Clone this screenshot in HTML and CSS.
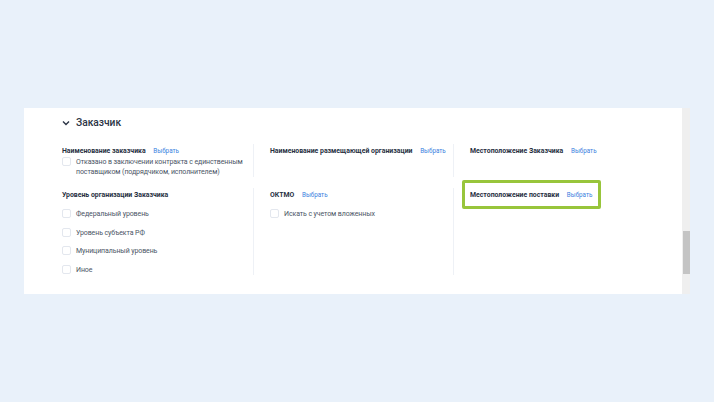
FILE: index.html
```html
<!DOCTYPE html>
<html lang="ru">
<head>
  <meta charset="UTF-8">
  <title>Заказчик</title>
  <link rel="stylesheet" href="styles.css">
</head>
<body>
  <div class="frame">
    <div class="card">
      <div class="section-head">
        <svg class="chevron" width="8" height="6" viewBox="0 0 8 6"><path d="M1 1.5 L4 4.5 L7 1.5" fill="none" stroke="#2b3445" stroke-width="1.4"/></svg>
        <span class="section-title">Заказчик</span>
      </div>

      <!-- Row 1 -->
      <div class="grid row1">
        <div class="col">
          <div class="label">Наименование заказчика <a class="pick">Выбрать</a></div>
          <label class="check"><span class="box"></span><span>Отказано в заключении контракта с единственным поставщиком (подрядчиком, исполнителем)</span></label>
        </div>
        <div class="col sep">
          <div class="label">Наименование размещающей организации <a class="pick">Выбрать</a></div>
        </div>
        <div class="col sep">
          <div class="label">Местоположение Заказчика <a class="pick">Выбрать</a></div>
        </div>
      </div>

      <!-- Row 2 -->
      <div class="grid row2">
        <div class="col">
          <div class="label">Уровень организации Заказчика</div>
          <div class="checks">
            <label class="check"><span class="box"></span><span>Федеральный уровень</span></label>
            <label class="check"><span class="box"></span><span>Уровень субъекта РФ</span></label>
            <label class="check"><span class="box"></span><span>Муниципальный уровень</span></label>
            <label class="check"><span class="box"></span><span>Иное</span></label>
          </div>
        </div>
        <div class="col sep">
          <div class="label">ОКТМО <a class="pick">Выбрать</a></div>
          <div class="checks">
            <label class="check"><span class="box"></span><span>Искать с учетом вложенных</span></label>
          </div>
        </div>
        <div class="col sep">
          <div class="highlight">
            <div class="label">Местоположение поставки <a class="pick">Выбрать</a></div>
          </div>
        </div>
      </div>
    </div>
    <div class="scrollbar"><div class="thumb"></div></div>
  </div>
</body>
</html>
```

FILE: styles.css
```css
body {
  margin: 0;
  background-color: #e9f1fa;
  font-family: Roboto, "Noto Sans", sans-serif;
  color: #2b3445;
}
.frame {
  display: flex;
  margin: 108px 0 0 24px;
}
.card {
  width: 658px;
  height: 186px;
  box-sizing: border-box;
  background-color: #fff;
  padding: 8px 0 0 38px;
}
.scrollbar {
  width: 8px;
  height: 186px;
  background-color: #efefef;
  position: relative;
}
.thumb {
  position: absolute;
  left: 1px;
  right: 0;
  top: 123px;
  height: 43px;
  background-color: #c4c4c4;
}
.section-head {
  display: flex;
  align-items: center;
  height: 13px;
  margin-bottom: 15px;
}
.chevron {
  margin-right: 6px;
}
.section-title {
  font-size: 10.2px;
  font-weight: 500;
  color: #2b3445;
}
.grid {
  display: grid;
  grid-template-columns: 191px 200px 1fr;
}
.row1 {
  height: 31px;
  margin-bottom: 13px;
}
.row2 {
  height: 87px;
}
.col {
  padding-top: 2px;
}
.col.sep {
  border-left: 1px solid #eef1f6;
  padding-left: 16px;
}
.label {
  font-size: 6.9px;
  font-weight: 700;
  color: #27303f;
  line-height: 10px;
  white-space: nowrap;
}
.pick {
  font-size: 6.3px;
  font-weight: 400;
  color: #3b7fe0;
  margin-left: 6px;
}
.check {
  display: flex;
  align-items: flex-start;
  font-size: 7px;
  letter-spacing: -0.1px;
  line-height: 10px;
  color: #4b5565;
}
.row1 .check {
  margin-top: 1px;
}
.box {
  flex: none;
  width: 7px;
  height: 7px;
  border: 1px solid #e3e7ee;
  border-radius: 2px;
  margin: 0 5px 0 0;
}
.checks {
  display: flex;
  flex-direction: column;
  gap: 8.7px;
  margin-top: 9px;
}
.highlight {
  display: block;
  width: max-content;
  margin: -10px 0 0 -8px;
  padding: 7px 6px 6px 5px;
  border: 3px solid #98c53b;
  border-radius: 2px;
}
```
